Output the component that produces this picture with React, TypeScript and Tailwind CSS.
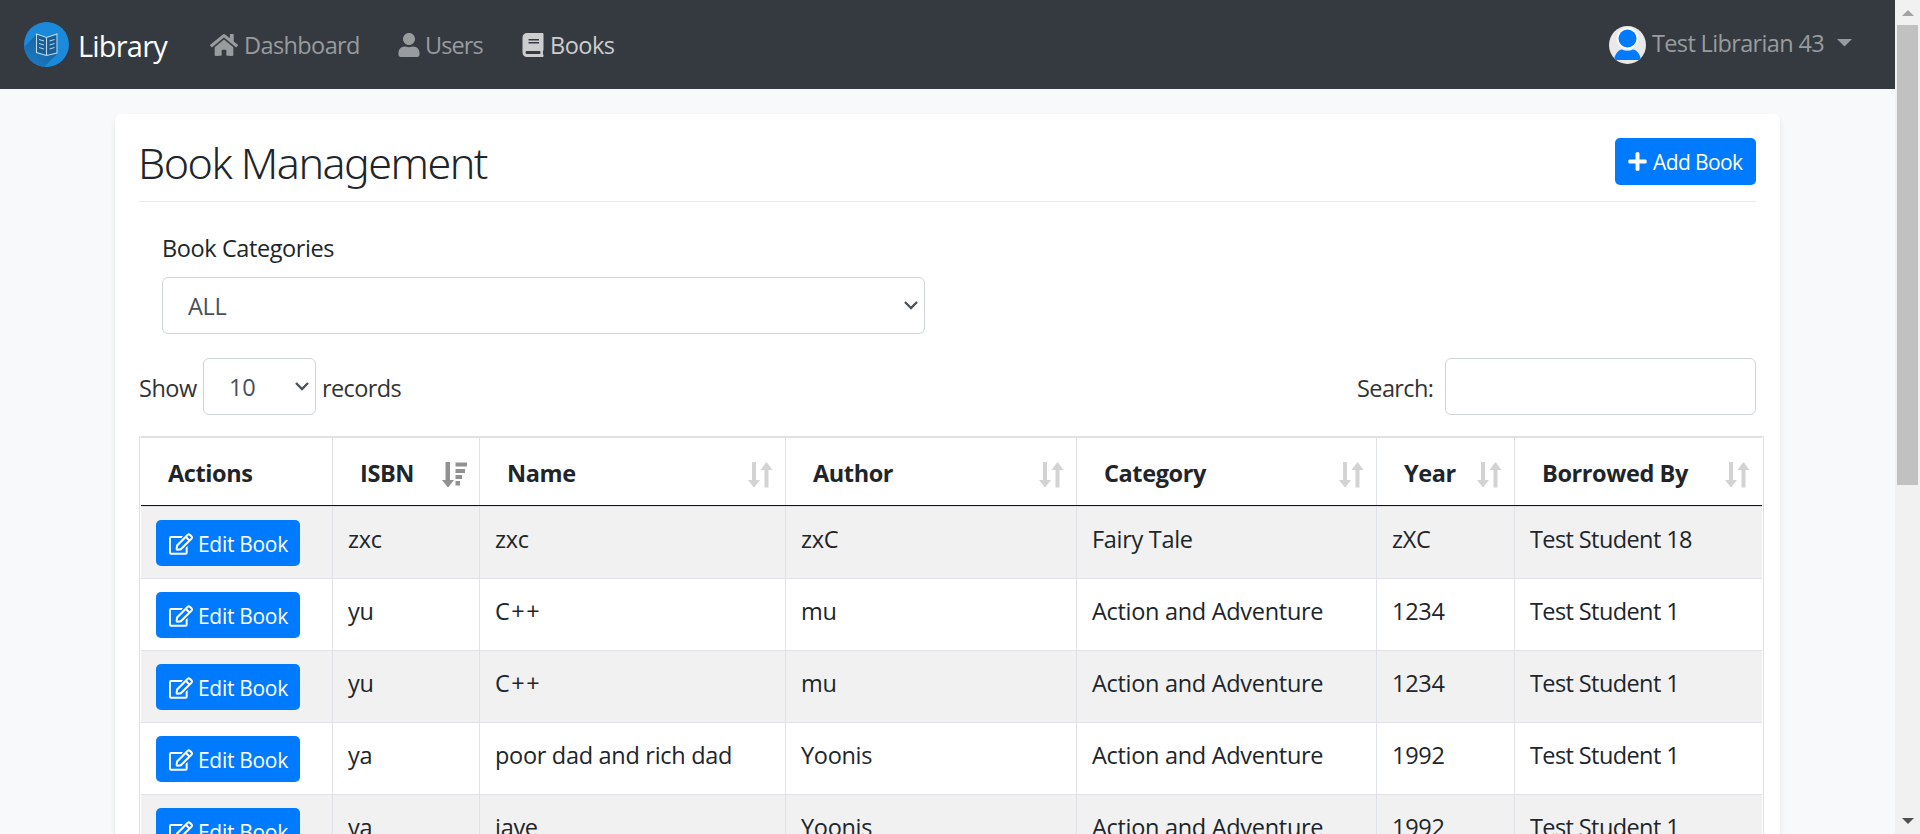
import type { ReactNode } from "react";
import { FaHome, FaUser, FaBook, FaPlus, FaRegEdit } from "react-icons/fa";

const rows = [
  ["zxc", "zxc", "zxC", "Fairy Tale", "zXC", "Test Student 18"],
  ["yu", "C++", "mu", "Action and Adventure", "1234", "Test Student 1"],
  ["yu", "C++", "mu", "Action and Adventure", "1234", "Test Student 1"],
  ["ya", "poor dad and rich dad", "Yoonis", "Action and Adventure", "1992", "Test Student 1"],
  ["ya", "jave", "Yoonis", "Action and Adventure", "1992", "Test Student 1"],
];

const headers = ["Actions", "ISBN", "Name", "Author", "Category", "Year", "Borrowed By"];

function cellTracking(text: string) {
  if (text === "C++") return "tracking-[1.5px]";
  if (text.startsWith("Test")) return "tracking-[-0.6px]";
  return "tracking-[-0.3px]";
}

function Logo() {
  return (
    <svg className="shrink-0" width="45" height="45" viewBox="0 0 45 45">
      <defs>
        <clipPath id="disc">
          <circle cx="22.5" cy="22.5" r="22.5" />
        </clipPath>
        <linearGradient id="shade" x1="1" y1="0" x2="0.2" y2="1">
          <stop offset="0" stopColor="#14598f" />
          <stop offset="1" stopColor="#1b7cc6" />
        </linearGradient>
      </defs>
      <g clipPath="url(#disc)">
        <rect width="45" height="45" fill="#1c8adb" />
        <path d="M12.500 12.500L0 25v20h20l13.500-13.500V13.500l-10.500 2z" fill="url(#shade)" />
        <path d="M12.500 12.500l10 3 10.500-2.500v18.500l-10.500 2-10-2.500z" fill="#185e95" />
        <g fill="none" stroke="#b9d9f0" strokeWidth="1.1">
          <path d="M12.500 12v18.500l10 3 10.500-2.500V12l-10.500 3.500zM22.500 15.500v18" />
          <path d="M15 17.500l5 1.500M15 21.500l5 1.500M15 25.500l5 1.500M25.500 19l5-1.500M25.500 23l5-1.500M25.500 27l5-1.500" strokeWidth="1" />
        </g>
      </g>
    </svg>
  );
}

function Avatar() {
  return (
    <svg className="shrink-0" width="37" height="38" viewBox="0 0 37 38">
      <defs>
        <clipPath id="face">
          <ellipse cx="18.500" cy="19" rx="18.500" ry="19" />
        </clipPath>
      </defs>
      <g clipPath="url(#face)">
        <rect width="37" height="38" fill="#e9e9e9" />
        <circle cx="18.500" cy="12.500" r="11" fill="#fafafa" />
        <circle cx="18.500" cy="12.500" r="9" fill="#007bff" />
        <path d="M5 34c1-6 4-10 8-10.500 3.500 1.600 7.500 1.600 11 0 4 .5 7 4.500 8 10.500z" fill="#007bff" />
      </g>
    </svg>
  );
}

function Chevron() {
  return (
    <svg className="shrink-0" width="14" height="9" viewBox="0 0 14 9" fill="none" stroke="#495057" strokeWidth="2.3">
      <path d="M1 1l6 6 6-6" />
    </svg>
  );
}

function SortBoth() {
  return (
    <svg className="shrink-0" width="25" height="26" viewBox="0 0 25 26" fill="#d3d3d3">
      <path d="M4 0h4v18h4l-5.500 7h-1L0 18h4zM16.500 25.500V8h-4L18 .5h1L24.500 8h-4v17.500z" />
    </svg>
  );
}

function SortDesc() {
  return (
    <svg className="shrink-0" width="25" height="26" viewBox="0 0 25 26" fill="#919191">
      <path d="M3.500 0h4.500v18h4l-5.500 7h-1L0 18h3.500zM13.500 .5H25v4H13.500zM13.500 7H23v4h-9.500zM13.500 13H20v4h-6.500zM13.500 19H18v4.500h-4.500z" />
    </svg>
  );
}

function HeadCell({ index, children }: { index: number; children: ReactNode }) {
  return (
    <th className="h-[67px] border-r border-[#dee2e6] p-0 font-bold last:border-r-0">
      <div className="flex items-center justify-between pr-3 pl-[27px]">
        <span className="pt-0.5 text-[23.5px] tracking-[-0.4px] whitespace-nowrap">{children}</span>
        <span className="pt-[7px]">{index === 0 ? null : index === 1 ? <SortDesc /> : <SortBoth />}</span>
      </div>
    </th>
  );
}

export default function App() {
  return (
    <div className="flex h-[834px] w-[1920px] overflow-hidden bg-[#f8f9fa] font-['Open_Sans',sans-serif] text-[23.5px] leading-9 tracking-[-0.3px] text-[#212529]">
      <div className="flex w-[1895px] shrink-0 flex-col">
        <nav className="flex h-[89px] shrink-0 items-center justify-between bg-[#343a40] pr-[43px] pl-6 text-[#999c9f]">
          <div className="flex items-center">
            <Logo />
            <span className="ml-[9px] w-[132px] pt-0.5 text-[29px] tracking-[-0.8px] text-white">Library</span>
            <span className="flex w-[188px] items-center gap-1.5">
              <FaHome className="shrink-0" size={28} />
              <span className="pt-px tracking-[-0.6px]">Dashboard</span>
            </span>
            <span className="flex w-[123px] items-center gap-1">
              <FaUser className="-ml-px shrink-0" size={24} />
              <span className="pt-px tracking-[-0.9px]">Users</span>
            </span>
            <span className="flex items-center gap-[5px] text-[#cccdce]">
              <FaBook className="shrink-0" size={24} />
              <span className="pt-px tracking-[-0.5px]">Books</span>
            </span>
          </div>
          <div className="flex items-center">
            <Avatar />
            <span className="ml-1.5 w-[185px] pb-[3px] tracking-[-0.65px] whitespace-nowrap">Test Librarian 43</span>
            <svg className="-mt-1" width="15" height="8" viewBox="0 0 15 8" fill="#999c9f">
              <path d="M0 0h15L7.500 7.500z" />
            </svg>
          </div>
        </nav>

        <main className="mt-[25px] ml-[115px] h-[720px] w-[1665px] rounded-t-md bg-white px-6 pt-6 shadow-[0_3px_6px_rgba(0,0,0,0.075)]">
          <div className="flex h-[63px] w-[1617px] items-start justify-between">
            <h1 className="-ml-px font-['Noto_Sans',sans-serif] text-[43px] leading-[50px] font-[350] tracking-[-1.5px]">Book Management</h1>
            <button className="flex h-[47px] w-[141px] items-center gap-[5px] rounded-[5px] bg-[#007bff] pl-3 text-[21px] tracking-[-0.6px] whitespace-nowrap text-white">
              <FaPlus className="shrink-0" size={21} />
              Add Book
            </button>
          </div>
          <div className="h-px w-[1617px] bg-[#ebebeb]" />

          <div className="mt-7 pl-[23px]">
            <label className="block tracking-[-0.4px]">Book Categories</label>
            <div className="mt-[11px] flex h-[57px] w-[763px] items-center justify-between rounded-md border border-[#ced4da] pr-1.5 pl-[25px] text-[#495057]">
              <span>ALL</span>
              <Chevron />
            </div>
          </div>

          <div className="mt-6 flex h-[57px] w-[1617px] items-center justify-between text-[#333]">
            <div className="flex items-center">
              <span className="w-16 pt-[3px] tracking-[-0.5px]">Show</span>
              <div className="flex h-[57px] w-[113px] items-center justify-between rounded-md border border-[#ced4da] pr-1.5 pl-[25px] text-[#495057]">
                <span>10</span>
                <Chevron />
              </div>
              <span className="pt-[3px] pl-1.5 tracking-[-0.6px]">records</span>
            </div>
            <div className="flex items-center">
              <span className="w-[88px] pt-[3px] tracking-[-0.6px]">Search:</span>
              <div className="h-[57px] w-[311px] rounded-md border border-[#ced4da]" />
            </div>
          </div>

          <div className="mt-[21px] w-[1625px] border border-[#dee2e6] px-px">
            <table className="w-[1621px] table-fixed border-separate border-spacing-0 border-t border-[#dee2e6]">
              <colgroup>
                <col className="w-[192px]" />
                <col className="w-[147px]" />
                <col className="w-[306px]" />
                <col className="w-[291px]" />
                <col className="w-[300px]" />
                <col className="w-[138px]" />
                <col className="w-[247px]" />
              </colgroup>
              <thead>
                <tr className="text-left">
                  {headers.map((h, i) => (
                    <HeadCell key={h} index={i}>{h}</HeadCell>
                  ))}
                </tr>
                <tr>
                  <td colSpan={7} className="h-0.5 border-t border-b border-t-[#111] border-b-[#dee2e6] p-0" />
                </tr>
              </thead>
              <tbody>
                {rows.map((row, r) => (
                  <tr key={r} className="h-[72px] align-top odd:bg-[#f1f1f1]">
                    <td className="h-[72px] border-r border-b border-[#dee2e6] p-0 pt-[13px] pl-[15px]">
                      <button className="flex h-[46px] w-36 items-center gap-[5px] rounded-[5px] bg-[#007bff] pt-px pl-[13px] text-[21px] whitespace-nowrap text-white">
                        <FaRegEdit className="shrink-0" size={24} />
                        Edit Book
                      </button>
                    </td>
                    {row.map((cell, c) => (
                      <td
                        key={c}
                        className={`h-[72px] border-r border-b border-[#dee2e6] p-0 pt-3.5 pl-[15px] whitespace-nowrap last:border-r-0 ${cellTracking(cell)}`}
                      >
                        {cell}
                      </td>
                    ))}
                  </tr>
                ))}
              </tbody>
            </table>
          </div>
        </main>
      </div>

      <div className="flex w-[25px] shrink-0 flex-col items-center bg-[#f1f1f1]">
        <svg className="mt-2.5 shrink-0" width="12" height="6" viewBox="0 0 12 6" fill="#a3a3a3">
          <path d="M6 0l6 6H0z" />
        </svg>
        <div className="mt-[9px] h-[460px] w-[21px] shrink-0 bg-[#c1c1c1]" />
        <svg className="mt-auto mb-2.5 shrink-0" width="12" height="6" viewBox="0 0 12 6" fill="#505050">
          <path d="M0 0h12L6 6z" />
        </svg>
      </div>
    </div>
  );
}
